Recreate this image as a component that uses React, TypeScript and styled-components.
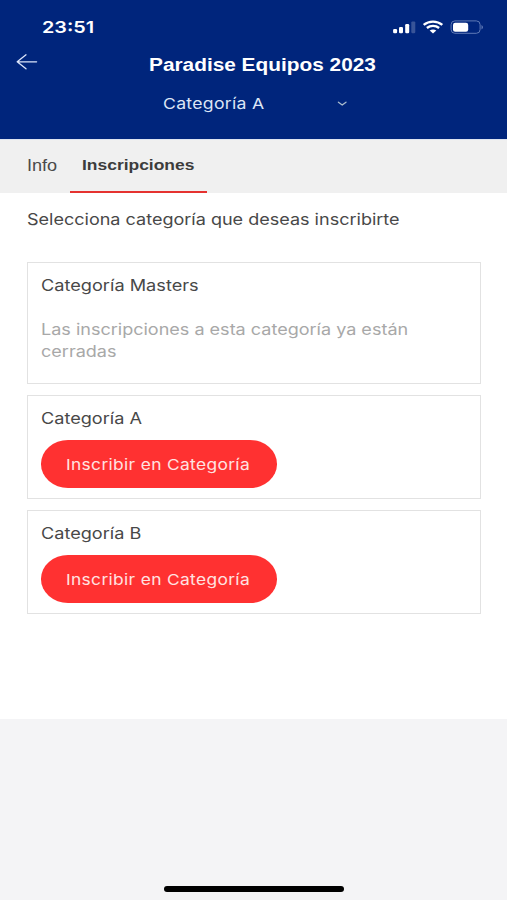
import React from 'react';
import styled, { createGlobalStyle } from 'styled-components';

const GlobalStyle = createGlobalStyle`
  * { box-sizing: border-box; }
  html, body { margin: 0; padding: 0; }
  body { background: #f4f4f6; font-family: Inter, "Liberation Sans", sans-serif; }
`;

const Screen = styled.div`
  display: flex;
  flex-direction: column;
  width: 100%;
  max-width: 507px;
  height: 900px;
  overflow: hidden;
  background: #f4f4f6;
`;

const Header = styled.header`
  display: flex;
  flex-direction: column;
  flex: none;
  height: 139px;
  background: #00257c;
  color: #fff;
`;

/* Wide-set text: glyphs are widened from the left edge. */
const Wide = styled.span<{ $size?: number; $weight?: number; $scale?: number; $spacing?: number }>`
  display: block;
  width: max-content;
  font-size: ${({ $size = 15.5 }) => $size}px;
  font-weight: ${({ $weight = 400 }) => $weight};
  letter-spacing: ${({ $spacing = 0 }) => $spacing}px;
  line-height: 22px;
  white-space: nowrap;
  transform: scaleX(${({ $scale = 1.163 }) => $scale});
  transform-origin: left center;
`;

const StatusBar = styled.div`
  display: flex;
  align-items: center;
  justify-content: space-between;
  height: 54px;
  padding: 0 22px 0 42px;
`;

const StatusIcons = styled.div`
  display: flex;
  align-items: center;
`;

const NavRow = styled.div`
  display: grid;
  grid-template-columns: 149px 1fr;
  height: 20px;
  align-items: center;
`;

const BackButton = styled.button`
  display: flex;
  width: 40px;
  margin: -6px 0 0 15px;
  padding: 0;
  border: 0;
  background: none;
  color: #dbe5fa;
`;

const Title = styled.h1`
  margin: 0;
  font-family: "Liberation Sans", Arial, sans-serif;
`;

const CategorySelect = styled.button`
  display: grid;
  grid-template-columns: 173px 12px;
  align-items: center;
  height: 60px;
  margin-left: 163px;
  padding: 0;
  border: 0;
  background: none;
  color: #dde5f6;
  font-family: inherit;
  text-align: left;
`;

const Tabs = styled.nav`
  display: flex;
  flex: none;
  height: 53.5px;
  padding-left: 26px;
  background: #f0f0f0;
  border-top: 1px solid #dde3f0;
  color: #444;
`;

const Tab = styled.div<{ $active?: boolean; $width: number }>`
  width: ${({ $width }) => $width}px;
  padding: ${({ $active }) => ($active ? '14px 0 0 12.5px' : '15px 0 0 0.6px')};
  border-bottom: ${({ $active }) => ($active ? '2px solid #e5322f' : '0')};
  color: ${({ $active }) => ($active ? '#3c3c3c' : '#4a4a4a')};
  font-family: "Liberation Sans", Arial, sans-serif;
`;

const Content = styled.main`
  flex: none;
  height: 526px;
  padding: 16px 26px 0 27px;
  background: #fff;
  color: #484848;
`;

const CardList = styled.section`
  display: flex;
  flex-direction: column;
  gap: 11px;
  margin-top: 31.5px;
`;

const Card = styled.article<{ $height: number }>`
  display: flex;
  flex-direction: column;
  height: ${({ $height }) => $height}px;
  padding: 12px 13px;
  border: 1px solid #e2e2e2;
`;

const CardTitle = styled.div`
  padding-left: 0.4px;
`;

const Notice = styled.div`
  margin-top: 22px;
  padding-left: 0.3px;
  color: #a8a8a8;
`;

const EnrollButton = styled.button`
  display: flex;
  align-items: center;
  flex: none;
  width: 236px;
  height: 47.5px;
  margin-top: 10px;
  padding: 2.5px 0 0 25.4px;
  border: 0;
  border-radius: 27px / 23.75px;
  background: #ff3131;
  color: #ffe3e1;
  font-family: inherit;
`;

const HomeArea = styled.footer`
  display: flex;
  flex: 1;
  align-items: flex-end;
  justify-content: center;
  padding-bottom: 8.5px;
`;

const HomeIndicator = styled.div`
  width: 180px;
  height: 5.5px;
  border-radius: 3px;
  background: #000;
`;

const BackArrow = () => (
  <svg width="24" height="18" viewBox="0 0 24 18" fill="none" stroke="currentColor" strokeWidth="1.3" strokeLinecap="round" strokeLinejoin="round">
    <path d="M21.6 8.8H2.4M11 1.8 2.2 8.8l8.8 7" />
  </svg>
);

const Chevron = () => (
  <svg width="12" height="8" viewBox="0 0 12 8" fill="none" stroke="#a9bccd" strokeWidth="1.3" strokeLinecap="round" strokeLinejoin="round">
    <path d="M2.4 2.2 6.2 5.1 10 2.2" />
  </svg>
);

const StatusGlyphs = () => (
  <svg width="94" height="18" viewBox="391 18 94 18" fill="none">
    <g fill="#fff">
      <rect x="393.1" y="29" width="4" height="4.3" rx="1.2" />
      <rect x="399" y="27" width="4" height="6.3" rx="1.2" />
      <rect x="405.2" y="24" width="4" height="9.3" rx="1.2" />
      <rect x="411.3" y="21.4" width="4" height="11.9" rx="1.2" opacity=".22" />
    </g>
    <g stroke="#fff" strokeWidth="2.4">
      <path d="M423.7 24.8c5.2-4.3 13.4-4.3 18.6 0" />
      <path d="M426.9 28c3.5-2.9 8.7-2.9 12.2 0" />
    </g>
    <path d="M429.7 30.5c1.9-1.5 4.7-1.5 6.6 0L433 33.4z" fill="#fff" />
    <rect x="451.1" y="20.9" width="29" height="12.4" rx="3.8" stroke="#5f7ab6" strokeWidth="1" />
    <rect x="453" y="22.7" width="15.2" height="9" rx="2.2" fill="#fff" />
    <path d="M481.6 25v4.4c1.5-.7 1.5-3.7 0-4.4z" fill="#7f96c9" />
  </svg>
);

const openCategories = ['Categoría A', 'Categoría B'];

export default function App() {
  return (
    <>
      <GlobalStyle />
      <Screen>
        <Header>
          <StatusBar>
            <Wide $size={16.5} $weight={600} $scale={1.2}>23:51</Wide>
            <StatusIcons><StatusGlyphs /></StatusIcons>
          </StatusBar>
          <NavRow>
            <BackButton aria-label="Volver"><BackArrow /></BackButton>
            <Title><Wide $size={18} $weight={700} $scale={1.157}>Paradise Equipos 2023</Wide></Title>
          </NavRow>
          <CategorySelect>
            <Wide $size={15} $scale={1.175} $spacing={0.25}>Categoría A</Wide>
            <Chevron />
          </CategorySelect>
        </Header>
        <Tabs>
          <Tab $width={43.5}><Wide $size={16} $scale={1.13}>Info</Wide></Tab>
          <Tab $active $width={137.5}><Wide $size={15.5} $weight={700} $scale={1.125}>Inscripciones</Wide></Tab>
        </Tabs>
        <Content>
          <Wide>Selecciona categoría que deseas inscribirte</Wide>
          <CardList>
            <Card $height={122}>
              <CardTitle><Wide $scale={1.172}>Categoría Masters</Wide></CardTitle>
              <Notice>
                <Wide>Las inscripciones a esta categoría ya están</Wide>
                <Wide>cerradas</Wide>
              </Notice>
            </Card>
            {openCategories.map((name) => (
              <Card key={name} $height={104}>
                <CardTitle><Wide $scale={1.168}>{name}</Wide></CardTitle>
                <EnrollButton><Wide $size={15} $scale={1.157} $spacing={0.3}>Inscribir en Categoría</Wide></EnrollButton>
              </Card>
            ))}
          </CardList>
        </Content>
        <HomeArea><HomeIndicator /></HomeArea>
      </Screen>
    </>
  );
}
